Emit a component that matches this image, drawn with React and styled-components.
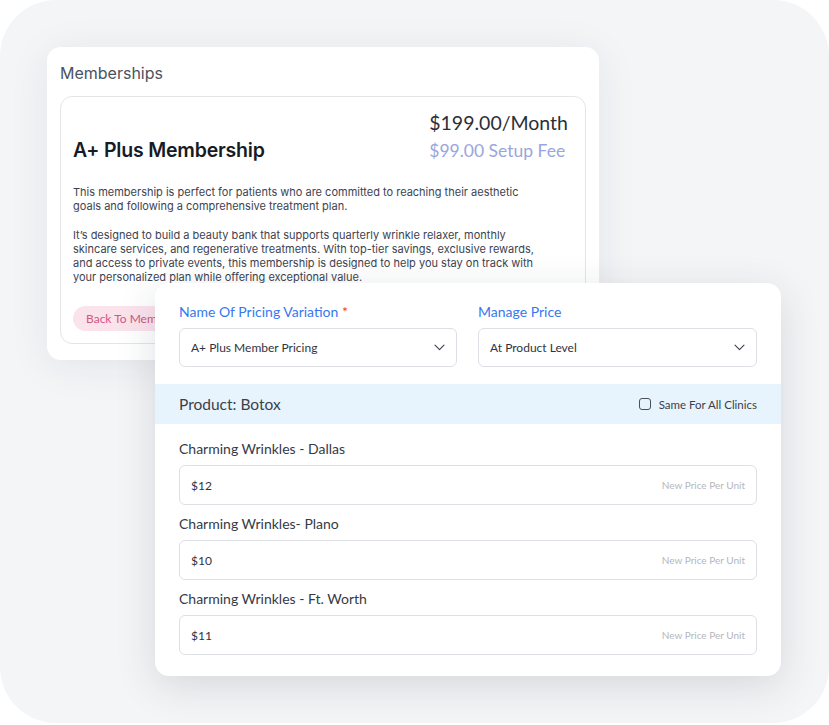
import React from 'react';
import styled, { createGlobalStyle } from 'styled-components';

const Global = createGlobalStyle`
  html, body { margin: 0; padding: 0; background: #ffffff; }
  * { box-sizing: border-box; }
`;

const Frame = styled.div`
  position: relative;
  width: 829px;
  height: 723px;
  border-radius: 56px;
  background: #f4f5f7;
  overflow: hidden;
`;

const MembershipCard = styled.section`
  position: absolute;
  left: 47px;
  top: 47px;
  width: 552px;
  height: 313px;
  background: #fff;
  border-radius: 14px;
  box-shadow: 0 6px 40px rgba(30, 40, 60, 0.08);
  padding: 16px 13px 16px;
  font-family: Inter, 'Open Sans', sans-serif;
`;

const CardTitle = styled.h2`
  margin: 0 0 13px;
  font-size: 16px;
  font-weight: 400;
  color: #4b5260;
  line-height: 20px;
`;

const Plan = styled.div`
  border: 1px solid #e3e5e8;
  border-radius: 12px;
  padding: 13px 17px 14px 12px;
  height: 248px;
  overflow: hidden;
`;

const PlanHead = styled.div`
  display: flex;
  justify-content: space-between;
  align-items: flex-end;
  margin-bottom: 22px;
`;

const PlanName = styled.h3`
  margin: 0 0 1px;
  font-size: 19.5px;
  font-weight: 600;
  color: #161b26;
  letter-spacing: -0.2px;
`;

const Prices = styled.div`
  text-align: left;
  font-family: Lato, sans-serif;
`;

const Monthly = styled.div`
  font-size: 19.5px;
  color: #2b2f3a;
  line-height: 26px;
`;

const Setup = styled.div`
  font-size: 17.5px;
  color: #9aa6dc;
  line-height: 24px;
  margin-top: 3px;
`;

const Para = styled.p`
  margin: 0 0 15px;
  max-width: 466px;
  font-size: 11px;
  line-height: 14px;
  color: #3d4350;
`;

const BackButton = styled.button`
  margin-top: 7px;
  border: none;
  background: #fbe3ec;
  color: #d25781;
  border-radius: 13px;
  height: 25px;
  padding: 0 13px;
  font-family: Lato, sans-serif;
  font-size: 12px;
`;

const PricingCard = styled.section`
  position: absolute;
  left: 155px;
  top: 283px;
  width: 626px;
  height: 393px;
  background: #fff;
  border-radius: 14px;
  box-shadow: 0 10px 40px rgba(30, 40, 60, 0.14);
  font-family: Lato, sans-serif;
  overflow: hidden;
`;

const TopFields = styled.div`
  display: grid;
  grid-template-columns: 278px 279px;
  column-gap: 21px;
  padding: 21px 24px 17px;
`;

const Field = styled.div`
  display: flex;
  flex-direction: column;
`;

const BlueLabel = styled.label`
  font-size: 14px;
  color: #3778ee;
  line-height: 16px;
  margin-bottom: 8px;
`;

const Required = styled.span`
  color: #ef3b3b;
`;

const Select = styled.div`
  height: 39px;
  border: 1px solid #dcdfe4;
  border-radius: 6px;
  display: flex;
  align-items: center;
  justify-content: space-between;
  padding: 0 11px;
  font-size: 12px;
  color: #2f3440;
`;

const ProductBar = styled.div`
  background: #e8f4fd;
  height: 40px;
  display: flex;
  align-items: center;
  justify-content: space-between;
  padding: 0 24px;
`;

const ProductName = styled.div`
  font-size: 15.5px;
  color: #3a3f4a;
`;

const CheckRow = styled.label`
  display: flex;
  align-items: center;
  gap: 8px;
  font-size: 11.5px;
  color: #3a3f4a;
`;

const Box = styled.span`
  width: 12px;
  height: 12px;
  border: 1.5px solid #4a4f5a;
  border-radius: 3px;
`;

const Clinics = styled.div`
  display: flex;
  flex-direction: column;
  padding: 16px 24px 0;
`;

const Clinic = styled.div`
  display: flex;
  flex-direction: column;
  margin-bottom: 10px;
`;

const ClinicLabel = styled.div`
  font-size: 14px;
  color: #353a45;
  line-height: 18px;
  margin-bottom: 7px;
`;

const PriceInput = styled.div`
  height: 40px;
  border: 1px solid #dcdfe4;
  border-radius: 6px;
  display: flex;
  align-items: center;
  justify-content: space-between;
  padding: 0 11px;
`;

const Value = styled.span`
  font-size: 12px;
  color: #2f3440;
`;

const Hint = styled.span`
  font-size: 10px;
  color: #b4b7bd;
`;

const Chevron = () => (
  <svg width="11" height="7" viewBox="0 0 11 7" fill="none">
    <path d="M1 1.2l4.5 4.5 4.5-4.5" stroke="#3a3f4a" strokeWidth="1.1" strokeLinecap="round" strokeLinejoin="round" />
  </svg>
);

const clinics = [
  { name: 'Charming Wrinkles - Dallas', price: '$12' },
  { name: 'Charming Wrinkles- Plano', price: '$10' },
  { name: 'Charming Wrinkles - Ft. Worth', price: '$11' },
];

export default function App() {
  return (
    <>
      <Global />
      <Frame>
        <MembershipCard>
          <CardTitle>Memberships</CardTitle>
          <Plan>
            <PlanHead>
              <PlanName>A+ Plus Membership</PlanName>
              <Prices>
                <Monthly>$199.00/Month</Monthly>
                <Setup>$99.00 Setup Fee</Setup>
              </Prices>
            </PlanHead>
            <Para>
              This membership is perfect for patients who are committed to reaching their aesthetic
              goals and following a comprehensive treatment plan.
            </Para>
            <Para>
              It’s designed to build a beauty bank that supports quarterly wrinkle relaxer, monthly
              skincare services, and regenerative treatments. With top-tier savings, exclusive rewards,
              and access to private events, this membership is designed to help you stay on track with
              your personalized plan while offering exceptional value.
            </Para>
            <BackButton>Back To Memberships</BackButton>
          </Plan>
        </MembershipCard>

        <PricingCard>
          <TopFields>
            <Field>
              <BlueLabel>
                Name Of Pricing Variation <Required>*</Required>
              </BlueLabel>
              <Select>
                A+ Plus Member Pricing
                <Chevron />
              </Select>
            </Field>
            <Field>
              <BlueLabel>Manage Price</BlueLabel>
              <Select>
                At Product Level
                <Chevron />
              </Select>
            </Field>
          </TopFields>
          <ProductBar>
            <ProductName>Product: Botox</ProductName>
            <CheckRow>
              <Box />
              Same For All Clinics
            </CheckRow>
          </ProductBar>
          <Clinics>
            {clinics.map((c) => (
              <Clinic key={c.name}>
                <ClinicLabel>{c.name}</ClinicLabel>
                <PriceInput>
                  <Value>{c.price}</Value>
                  <Hint>New Price Per Unit</Hint>
                </PriceInput>
              </Clinic>
            ))}
          </Clinics>
        </PricingCard>
      </Frame>
    </>
  );
}
